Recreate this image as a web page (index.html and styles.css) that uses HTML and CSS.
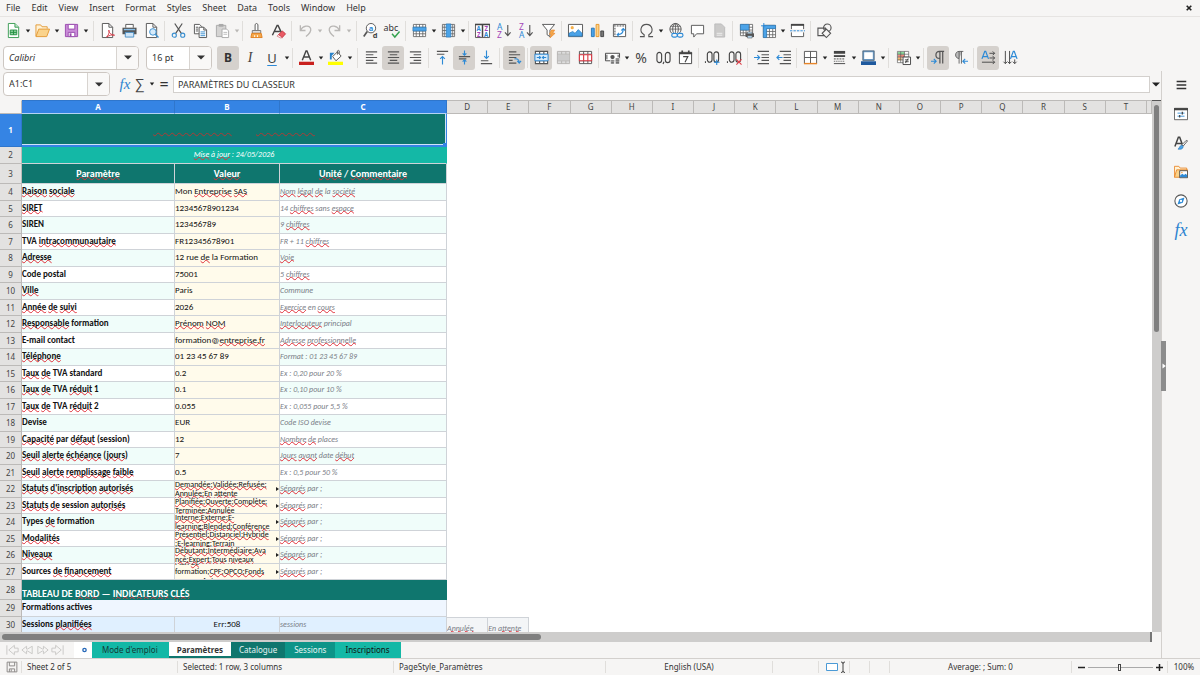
FILE: index.html
```html
<!DOCTYPE html>
<html lang="en">
<head>
<meta charset="utf-8">
<title>Paramètres - Calc</title>
<link rel="stylesheet" href="styles.css">
</head>
<body>
<svg class="sprite" aria-hidden="true">
  <symbol id="caret" viewBox="0 0 6 4"><path d="M.8.5h4.4L3 3.4z" fill="currentColor"/></symbol>
  <symbol id="down" viewBox="0 0 8 5"><path d="M0 .5h8L4 4.6z" fill="currentColor"/></symbol>
</svg>
<nav class="menubar" aria-label="Menu">
  <button>File</button><button>Edit</button><button>View</button><button>Insert</button><button>Format</button><button>Styles</button><button>Sheet</button><button>Data</button><button>Tools</button><button>Window</button><button>Help</button>
  <button class="close" aria-label="Close document"><svg width="6" height="6" viewBox="0 0 6 6"><path d="M.7.7l4.6 4.6M5.3.7L.7 5.3" stroke="#222" stroke-width="1.6"/></svg></button>
</nav>

<div class="toolbar standard" role="toolbar" aria-label="Standard">
  <button class="ico" aria-label="New"><svg viewBox="0 0 16 16"><path d="M2.5.5h7l4 4v11h-11z" fill="#fff" stroke="#3a9c53"/><path d="M9.5.5v4h4" fill="#bfe6c8" stroke="#3a9c53"/><path d="M4.500 7.500h7v5h-7zM4.500 10h7M8 7.500v5" fill="#8fd3a0" stroke="#249042"/></svg></button><button class="drop" aria-label="New options"><svg><use href="#caret"/></svg></button>
  <button class="ico" aria-label="Open"><svg viewBox="0 0 16 16"><path d="M1 14V2h5l1.500 2H13v2" fill="#fff2d5" stroke="#e39a35"/><path d="M1 14.500L4 6.500h11.500L12.500 14.500z" fill="#fad38c" stroke="#e39a35"/></svg></button><button class="drop" aria-label="Open options"><svg><use href="#caret"/></svg></button>
  <button class="ico" aria-label="Save"><svg viewBox="0 0 16 16"><path d="M1.500 1.500h13v13h-13z" fill="#c98bd8" stroke="#9a4cae"/><path d="M4.500 1.500h7v5h-7zM4.500 10h7v4.500h-7z" fill="#fff" stroke="#9a4cae"/><path d="M7 11v3.500" stroke="#9a4cae" stroke-width="2"/></svg></button><button class="drop" aria-label="Save options"><svg><use href="#caret"/></svg></button>
  <i class="sep wide"></i>
  <button class="ico" aria-label="Export as PDF"><svg viewBox="0 0 16 16"><path d="M2.500.5h7l4 4v11h-11z" fill="#fff" stroke="#555"/><path d="M9.500.5v4h4" fill="none" stroke="#555"/><path d="M7 15c3-3 3-6 2.500-7.500-1 1.500 2 5.500 6 5.500-3-1-6 .5-8.500 2z" fill="#fff" stroke="#d33a45"/></svg></button>
  <button class="ico" aria-label="Print"><svg viewBox="0 0 16 16"><path d="M4 5V1.500h8V5" fill="#fff" stroke="#555"/><path d="M.5 5h15v7H.5z" fill="#555"/><path d="M2 7h12" stroke="#8ac0ea" stroke-width="1.500"/><path d="M3.500 10h9v5h-9z" fill="#cfe5f7" stroke="#4a90c8"/></svg></button>
  <button class="ico" aria-label="Print preview"><svg viewBox="0 0 16 16"><path d="M2.500.5h7l4 4v11h-11z" fill="#fff" stroke="#555"/><path d="M9.500.5v4h4" fill="none" stroke="#555"/><circle cx="9.500" cy="9.500" r="3.500" fill="#d7ebfa" stroke="#3a8fd0"/><path d="M12 12l3.500 3.500" stroke="#3a8fd0" stroke-width="1.500"/></svg></button>
  <i class="sep"></i>
  <button class="ico" aria-label="Cut"><svg viewBox="0 0 16 16" fill="none"><path d="M4 .5l7 10.500M12 .5L5 11" stroke="#555" stroke-width="1.300"/><circle cx="3.500" cy="13" r="2.200" stroke="#3a8fd0" stroke-width="1.200"/><circle cx="12.500" cy="13" r="2.200" stroke="#3a8fd0" stroke-width="1.200"/></svg></button>
  <button class="ico" aria-label="Copy"><svg viewBox="0 0 16 16" fill="#fff" stroke="#555"><path d="M1.500 1.500h5.500l2.500 2.500v7.500h-8z"/><path d="M6.500 4.500h5l3 3v8h-8z"/><path d="M11.500 4.500v3h3M3 4.500h2.500M3 6.500h2.500M3 8.500h2.500" fill="none"/><path d="M8 9.500h5M8 11.500h5M8 13.500h5" stroke="#3a8fd0"/></svg></button>
  <button class="ico off" aria-label="Paste" disabled><svg viewBox="0 0 16 16"><path d="M1.500 2.500h10v12h-10z" fill="#d5d4d3" stroke="#aaa"/><path d="M4 1h5v3H4z" fill="#aaa"/><path d="M7.500 6.500h5l2 2v7h-7z" fill="#fff" stroke="#aaa"/><path d="M9 10h4M9 12h4" stroke="#bbb"/></svg></button><button class="drop off" aria-label="Paste options" disabled><svg><use href="#caret"/></svg></button>
  <i class="sep"></i>
  <button class="ico" aria-label="Clone formatting"><svg viewBox="0 0 16 16"><path d="M6.500 8V1.500q1.500-2 3 0V8" fill="#fff" stroke="#555"/><path d="M3.500 8h9v3h-9z" fill="#ddd" stroke="#777"/><path d="M3 11h10l1 4.500H2z" fill="#f5a84b" stroke="#e07f20"/><path d="M6 15v-2M9 15v-2" stroke="#fff"/></svg></button>
  <button class="ico" aria-label="Clear formatting"><svg viewBox="0 0 16 16"><path d="M1.500 13L6.500 2.500h1L11 10M4 9h5.500" fill="none" stroke="#444" stroke-width="1.500"/><path d="M8 12.500l4-4 3.500 3L12 15.500z" fill="#ea5b65" stroke="#c93440"/><path d="M8 12.500l4 3-1.500.5-4-2z" fill="#fff" stroke="#c93440" stroke-width=".6"/></svg></button>
  <i class="sep"></i>
  <button class="ico off" aria-label="Undo" disabled><svg viewBox="0 0 16 16"><path d="M2.500 2.500v5.500H8M2.500 8C5 3 12 1.500 13.500 6c1 3.500-2 6-5 8.500" fill="none" stroke="#b9b7b5" stroke-width="1.400"/></svg></button><button class="drop off" aria-label="Undo options" disabled><svg><use href="#caret"/></svg></button>
  <button class="ico off" aria-label="Redo" disabled><svg viewBox="0 0 16 16"><path d="M13.500 2.500v5.500H8M13.500 8C11 3 4 1.500 2.500 6c-1 3.500 2 6 5 8.500" fill="none" stroke="#b9b7b5" stroke-width="1.400"/></svg></button><button class="drop off" aria-label="Redo options" disabled><svg><use href="#caret"/></svg></button>
  <i class="sep wide"></i>
  <button class="ico" aria-label="Find and replace"><svg viewBox="0 0 16 16"><circle cx="8.500" cy="5.500" r="5" fill="#fff" stroke="#555"/><path d="M4.500 9L.8 14.500" stroke="#555" stroke-width="1.800"/><text x="6" y="8.500" font-size="8" font-weight="700" fill="#2d8ad6">a</text><text x="10.500" y="16" font-size="8" font-weight="700" fill="#444">d</text></svg></button>
  <button class="ico abc" aria-label="Spelling"><svg viewBox="0 0 16 16"><text x="-1.500" y="8" font-size="9.500" fill="#333">abc</text><path d="M7.500 11.500l3 3.500 5-6" fill="none" stroke="#35a34f" stroke-width="1.500"/></svg></button>
  <i class="sep"></i>
  <button class="ico" aria-label="Row"><svg viewBox="0 0 16 16"><path d="M1.500 1.500h13v13h-13z" fill="#fff"/><path d="M1.500 1.500h13v13h-13zM1.500 4.500h13M1.500 8.500h13M1.500 11.500h13M4.500 1.500v13M8 1.500v13M11.500 1.500v13" fill="none" stroke="#666" stroke-width=".9"/><path d="M1 4.500h14v4H1z" fill="#4ba3e8" stroke="#2878b8" stroke-width=".7"/></svg></button><button class="drop" aria-label="Row options"><svg><use href="#caret"/></svg></button>
  <button class="ico" aria-label="Column"><svg viewBox="0 0 16 16"><path d="M1.500 1.500h13v13h-13z" fill="#fff"/><path d="M1.500 1.500h13v13h-13zM1.500 4.500h13M1.500 8h13M1.500 11.500h13M3.500 1.500v13M12.500 1.500v13" fill="none" stroke="#666" stroke-width=".9"/><path d="M5.500 1h5v14h-5z" fill="#4ba3e8" stroke="#2878b8" stroke-width=".7"/></svg></button><button class="drop" aria-label="Column options"><svg><use href="#caret"/></svg></button>
  <i class="sep"></i>
  <button class="ico" aria-label="Sort"><svg viewBox="0 0 16 16"><path d="M.5 1.500h15v14H.5z" fill="#fff" stroke="#555"/><path d="M0 1.500h16M8 2v13" stroke="#444" stroke-width="1.600"/><g font-size="6.500" font-weight="700"><text x="1.700" y="8.500" fill="#2d8ad6">A</text><text x="2" y="15" fill="#a445b8">Z</text><text x="10" y="8.500" fill="#a445b8">Z</text><text x="9.700" y="15" fill="#2d8ad6">A</text></g></svg></button>
  <button class="ico" aria-label="Sort ascending"><svg viewBox="0 0 16 16"><g font-size="9"><text x="0" y="7" fill="#2d8ad6">A</text><text x="0" y="16" fill="#a445b8">Z</text></g><path d="M11.500 2v11M8.500 10l3 3.500 3-3.500" fill="none" stroke="#555" stroke-width="1.200"/></svg></button>
  <button class="ico" aria-label="Sort descending"><svg viewBox="0 0 16 16"><g font-size="9"><text x="0" y="7" fill="#a445b8">Z</text><text x="0" y="16" fill="#2d8ad6">A</text></g><path d="M11.500 2v11M8.500 10l3 3.500 3-3.500" fill="none" stroke="#555" stroke-width="1.200"/></svg></button>
  <button class="ico" aria-label="AutoFilter"><svg viewBox="0 0 16 16"><path d="M1.500 1.500h13l-5 6v7l-3-2v-5z" fill="#fff" stroke="#555"/><path d="M11 7.500h3.500L12.500 11H15l-5.500 5L11 12H9z" fill="#f5a84b" stroke="#e8862a" stroke-width=".7"/></svg></button>
  <i class="sep"></i>
  <button class="ico" aria-label="Insert image"><svg viewBox="0 0 16 16"><path d="M.5 1.500h15v13H.5z" fill="#fff" stroke="#555"/><path d="M1 14v-3l4-2 2.500 2L11 7l4 4v3z" fill="#4ba3e8" stroke="#2878b8" stroke-width=".7"/><circle cx="4.500" cy="5" r="1.700" fill="#f5b04b"/></svg></button>
  <button class="ico" aria-label="Insert chart"><svg viewBox="0 0 16 16"><path d="M1.500 5.500h3v9h-3z" fill="#4ba3e8" stroke="#2878b8"/><path d="M6.500 1.500h3v13h-3z" fill="#fad38c" stroke="#e8962a"/><path d="M11.500 8.500h3v6h-3z" fill="#777" stroke="#444"/></svg></button>
  <button class="ico" aria-label="Pivot table"><svg viewBox="0 0 16 16"><path d="M1.500 1.500h13v13h-13z" fill="#fff" stroke="#555"/><path d="M2 3h12M3 2v12" stroke="#999" stroke-width="2" stroke-dasharray="2 1"/><path d="M6 12.500c4 0 6-2 6-6M10 8l2-2 2 2M7.500 10.500l-2 2 2 1.800" fill="none" stroke="#2d8ad6" stroke-width="1.200"/></svg></button>
  <i class="sep"></i>
  <button class="ico" aria-label="Special character"><svg viewBox="0 0 16 16"><path d="M1 14.500h4.500v-2C-.5 9 2 1.500 8 1.500S16.500 9 10.500 12.500v2H15" fill="none" stroke="#555" stroke-width="1.200"/></svg></button><button class="drop" aria-label="Special character options"><svg><use href="#caret"/></svg></button>
  <button class="ico" aria-label="Hyperlink"><svg viewBox="0 0 16 16" fill="none"><circle cx="8" cy="6.500" r="6" stroke="#555"/><ellipse cx="8" cy="6.500" rx="3" ry="6" stroke="#555"/><path d="M2 6.500h12M3 3.500h10M8 .5v12" stroke="#555" stroke-width=".8"/><path d="M4 10.500h12v5H4z" fill="#f6f5f4"/><rect x="4" y="11" width="6" height="4" rx="2" stroke="#2d8ad6" stroke-width="1.200"/><rect x="10" y="11" width="6" height="4" rx="2" stroke="#2d8ad6" stroke-width="1.200"/></svg></button>
  <button class="ico" aria-label="Comment"><svg viewBox="0 0 16 16"><path d="M1.500 2.500h13v9H7l-3 3.500v-3.500H1.500z" fill="#fff" stroke="#555"/></svg></button>
  <button class="ico off" aria-label="Headers and footers" disabled><svg viewBox="0 0 16 16"><path d="M3 1h7l3.500 3.500V15H3z" fill="#cbcac9" stroke="#bbb"/><path d="M5 11h6M5 13h6" stroke="#eee"/></svg></button>
  <i class="sep"></i>
  <button class="ico" aria-label="Print area"><svg viewBox="0 0 16 16"><path d="M1.500 1.500h13v12h-13z" fill="#fff"/><path d="M1.500 1.500h13v12h-13zM1.500 4.500h13M1.500 7.500h13M1.500 10.500h13M4.500 1.500v12M7.500 1.500v12M11 1.500v12" fill="none" stroke="#666" stroke-width=".9"/><path d="M1.500 1.500h9v6h-9z" fill="#4ba3e8" stroke="#2878b8" stroke-width=".7"/><path d="M7 11h9v4H7z" fill="#555"/><path d="M9 9.500h5v2H9zM9 13.500h5V16H9z" fill="#b9dcf5" stroke="#555" stroke-width=".6"/></svg></button>
  <button class="ico" aria-label="Freeze"><svg viewBox="0 0 16 16"><path d="M2.500 2.500h13v13h-13z" fill="#fff"/><path d="M2.500 2.500h13v13h-13zM2.500 5.500h13M2.500 9h13M2.500 12.500h13M5.500 2.500v13M9 2.500v13M12.500 2.500v13" fill="none" stroke="#666" stroke-width=".9"/><path d="M2.500 2.500h13v3.500h-9.500v9.500h-3.500z" fill="#4ba3e8" stroke="#2878b8" stroke-width=".7"/><path d="M0 3h5M3 0v5" stroke="#2d8ad6"/></svg></button><button class="drop" aria-label="Freeze options"><svg><use href="#caret"/></svg></button>
  <button class="ico" aria-label="Split window"><svg viewBox="0 0 16 16"><path d="M1.500 6.500v-5h13v5M1.500 10v4.500h13V10" fill="#fff" stroke="#555"/><path d="M1 2h14" stroke="#444" stroke-width="2"/><path d="M0 8.300h16" stroke="#2d8ad6" stroke-dasharray="2.500 1.200"/></svg></button>
  <i class="sep"></i>
  <button class="ico" aria-label="Draw functions"><svg viewBox="0 0 16 16" fill="none" stroke="#555" stroke-width="1.200"><path d="M1 5.500h8v8H1z"/><circle cx="11" cy="5" r="4"/><path d="M10 6.500l4.500 4.500-4.500 4.500L5.500 11z" fill="#f6f5f4"/></svg></button>
</div>

<div class="toolbar formatting" role="toolbar" aria-label="Formatting">
  <div class="combo font"><input aria-label="Font name" value="Calibri"><button aria-label="Show fonts"><svg><use href="#down"/></svg></button></div>
  <div class="combo size"><input aria-label="Font size" value="16 pt"><button aria-label="Show sizes"><svg><use href="#down"/></svg></button></div>
  <button class="ico on glyph bold" aria-label="Bold">B</button>
  <button class="ico glyph ital" aria-label="Italic">I</button>
  <button class="ico glyph under" aria-label="Underline">U</button><button class="drop" aria-label="Underline options"><svg><use href="#caret"/></svg></button>
  <i class="sep"></i>
  <button class="ico" aria-label="Font color"><svg viewBox="0 0 16 16"><path d="M3.500 11L7.500 1h1l4 10M5 7.500h6" fill="none" stroke="#444" stroke-width="1.500"/><path d="M0 12.500h16V16H0z" fill="#c9211e"/></svg></button><button class="drop" aria-label="Font colors"><svg><use href="#caret"/></svg></button>
  <button class="ico" aria-label="Highlighting"><svg viewBox="0 0 16 16"><path d="M5 7l5-5 4 4.500-5.500 5z" fill="#fff" stroke="#555"/><path d="M10 5V1q1.500-1.500 2 0v3" fill="none" stroke="#555"/><path d="M2 10V3h5L4 6v4z" fill="#2b83ca"/><path d="M0 12.500h16V16H0z" fill="#ff0"/></svg></button><button class="drop" aria-label="Highlighting colors"><svg><use href="#caret"/></svg></button>
  <i class="sep wide"></i>
  <button class="ico" aria-label="Align left"><svg viewBox="0 0 16 16"><path d="M2 2h12M2 5h8M2 8h12M2 11h8M2 14h12" stroke="#555" stroke-width="1.200"/></svg></button>
  <button class="ico on" aria-label="Center horizontally"><svg viewBox="0 0 16 16"><path d="M2 2h12M4 5h8M2 8h12M4 11h8M2 14h12" stroke="#555" stroke-width="1.200"/></svg></button>
  <button class="ico" aria-label="Align right"><svg viewBox="0 0 16 16"><path d="M2 2h12M6 5h8M2 8h12M6 11h8M2 14h12" stroke="#555" stroke-width="1.200"/></svg></button>
  <i class="sep"></i>
  <button class="ico" aria-label="Align top"><svg viewBox="0 0 16 16"><path d="M2 1.500h12M2 4.500h8" stroke="#555" stroke-width="1.200"/><path d="M8 15.500V7M5.500 9.500L8 7l2.500 2.500" fill="none" stroke="#2d8ad6" stroke-width="1.200"/></svg></button>
  <button class="ico on" aria-label="Center vertically"><svg viewBox="0 0 16 16"><path d="M2 7h12M2 9.500h8" stroke="#555" stroke-width="1.200"/><path d="M8 .5v5M6 3.500l2 2 2-2M8 15.500v-5M6 12.500l2-2 2 2" fill="none" stroke="#2d8ad6" stroke-width="1.200"/></svg></button>
  <button class="ico" aria-label="Align bottom"><svg viewBox="0 0 16 16"><path d="M2 11.500h8M2 14.500h12" stroke="#555" stroke-width="1.200"/><path d="M8 .5V9M5.500 6.500L8 9l2.500-2.500" fill="none" stroke="#2d8ad6" stroke-width="1.200"/></svg></button>
  <i class="sep mid"></i>
  <button class="ico on" aria-label="Wrap text"><svg viewBox="0 0 16 16"><path d="M2 2h8M2 5h12M2 8h8M2 11h4M2 14h8" stroke="#555" stroke-width="1.200"/><path d="M8 9.500c3-.5 5 .5 5 4M11 11.500l2 2.500 2-2.500" fill="none" stroke="#2d8ad6" stroke-width="1.200"/></svg></button>
  <i class="sep"></i>
  <button class="ico on" aria-label="Merge and center cells"><svg viewBox="0 0 16 16"><path d="M1.500 1.500h13v13h-13z" fill="#fff"/><path d="M1.500 1.500h13v13h-13zM1.500 4.500h13M1.500 11.500h13M6 1.500v3M10.500 1.500v3M6 11.500v3M10.500 11.500v3" fill="none" stroke="#555" stroke-width="1.200"/><path d="M1 4.500h14v7H1z" fill="#d7ebfa" stroke="#2d8ad6"/><path d="M3 8h4M9 8h4M5.500 6.500L7 8 5.500 9.500M10.500 6.500L9 8l1.500 1.500" fill="none" stroke="#2d8ad6" stroke-width="1.200"/></svg></button>
  <button class="ico off" aria-label="Merge cells" disabled><svg viewBox="0 0 16 16"><path d="M1.500 1.500h13v13h-13zM1.500 4.500h13M1.500 11.500h13M6 1.500v3M10.500 1.500v3M6 11.500v3M10.500 11.500v3" fill="#ddd" stroke="#b5b3b1"/><path d="M2 5h12v6H2z" fill="#ccc"/></svg></button>
  <button class="ico" aria-label="Unmerge cells"><svg viewBox="0 0 16 16"><path d="M1.500 1.500h13v13h-13zM1.500 4.500h13M1.500 11.500h13M6 1.500v3M10.500 1.500v3M6 11.500v3M10.500 11.500v3" fill="#fff" stroke="#555"/><path d="M1.500 5h13v6.500h-13zM6 5v6M10.500 5v6" fill="#fff" stroke="#d93a45" stroke-width="1.200"/></svg></button>
  <i class="sep"></i>
  <button class="ico" aria-label="Format as currency"><svg viewBox="0 0 16 16"><path d="M.5 3.500h15v8H.5z" fill="#fff" stroke="#444"/><circle cx="8" cy="7.500" r="2.300" fill="#555"/><path d="M2 5v5M14 5v3" stroke="#444"/><path d="M6 10.500h4V15H6zM11 8.500h4.500V15H11z" fill="#666" stroke="#fff" stroke-width=".7"/><path d="M6 12.500h4M11 10.500h5M11 12.500h5" stroke="#ddd" stroke-width=".6"/></svg></button><button class="drop" aria-label="Currency options"><svg><use href="#caret"/></svg></button>
  <button class="ico glyph num" aria-label="Format as percent">%</button>
  <button class="ico" aria-label="Format as number"><svg viewBox="0 0 16 16" fill="none" stroke="#444" stroke-width="1.200"><rect x="1" y="2.500" width="5" height="11" rx="2.500"/><rect x="10" y="2.500" width="5" height="11" rx="2.500"/><path d="M8.500 12.500L7.500 15"/></svg></button>
  <button class="ico" aria-label="Format as date"><svg viewBox="0 0 16 16"><path d="M1.500 2.500h13v12h-13z" fill="#fff" stroke="#444"/><path d="M1 3.500h14M4.500.5v3M11.500.5v3" stroke="#444" stroke-width="1.800"/><path d="M5.500 7h5L7.500 13" fill="none" stroke="#444" stroke-width="1.200"/></svg></button>
  <i class="sep"></i>
  <button class="ico" aria-label="Add decimal place"><svg viewBox="0 0 16 16" fill="none" stroke="#444" stroke-width="1.200"><path d="M.5 12v1.800"/><rect x="2.500" y="2" width="5" height="11" rx="2.500"/><rect x="9.500" y="2" width="5" height="11" rx="2.500"/><path d="M12.500 10v6M9.500 13h6" stroke="#2d8ad6"/></svg></button>
  <button class="ico" aria-label="Delete decimal place"><svg viewBox="0 0 16 16" fill="none" stroke="#444" stroke-width="1.200"><path d="M.5 12v1.800"/><rect x="2.500" y="2" width="5" height="11" rx="2.500"/><rect x="9.500" y="2" width="5" height="11" rx="2.500"/><path d="M10 10l5.500 5.500M15.500 10L10 15.500" stroke="#e0404a"/></svg></button>
  <i class="sep"></i>
  <button class="ico" aria-label="Increase indent"><svg viewBox="0 0 16 16" fill="none"><path d="M4 1.500h12M8 5h8M8 8h8M8 11h8M4 14.500h12" stroke="#555" stroke-width="1.200"/><path d="M0 8h6M3.500 5.500L6 8l-2.500 2.500" stroke="#2d8ad6" stroke-width="1.200"/></svg></button>
  <button class="ico" aria-label="Decrease indent"><svg viewBox="0 0 16 16" fill="none"><path d="M4 1.500h12M8 5h8M8 8h8M8 11h8M4 14.500h12" stroke="#555" stroke-width="1.200"/><path d="M1 8h6M3.500 5.500L1 8l2.500 2.500" stroke="#2d8ad6" stroke-width="1.200"/></svg></button>
  <i class="sep"></i>
  <button class="ico" aria-label="Borders"><svg viewBox="0 0 16 16"><path d="M1.500 14.500v-13h13v13M8 1.500v13M1.500 8h13" fill="#fff" stroke="#555"/><path d="M1 14.500h14" stroke="#e8862a" stroke-width="1.500"/></svg></button><button class="drop" aria-label="Border options"><svg><use href="#caret"/></svg></button>
  <button class="ico" aria-label="Border style"><svg viewBox="0 0 16 16" stroke="#444"><path d="M2 2.500h12" stroke-width="3"/><path d="M2 6.500h12" stroke-width="2"/><path d="M2 9.500h12" stroke-dasharray="2 1"/><path d="M2 12h12" stroke-dasharray="1 1"/><path d="M2 14.500h12"/></svg></button><button class="drop" aria-label="Border style options"><svg><use href="#caret"/></svg></button>
  <button class="ico" aria-label="Border color"><svg viewBox="0 0 16 16"><path d="M2.500 1.500h11v9h-11z" fill="#fff" stroke="#6a9fcf" stroke-width="1.800"/><path d="M2 1h12v10H2z" fill="none" stroke="#444" stroke-width=".6"/><path d="M0 12h16v4H0z" fill="#1f5a9e"/></svg></button><button class="drop" aria-label="Border colors"><svg><use href="#caret"/></svg></button>
  <i class="sep mid"></i>
  <button class="ico" aria-label="Conditional formatting"><svg viewBox="0 0 16 16"><path d="M1.500 1.500h12v12h-12z" fill="#fff"/><path d="M2 2h7v3H2z" fill="#8ddb9b"/><path d="M2 5h7v3H2z" fill="#f08a7c"/><path d="M2 8h4v3H2z" fill="#f4b86c"/><path d="M1.500 1.500h12v12h-12zM1.500 4.500h12M1.500 7.500h12M1.500 10.500h12M5 1.500v12M9 1.500v12" fill="none" stroke="#555" stroke-width=".7"/><path d="M7.500 7.500h8v8h-8z" fill="#fff" stroke="#444"/><path d="M9.500 10.500h4M9.500 12.500h4M13 9l-3 5" stroke="#444"/></svg></button><button class="drop" aria-label="Conditional options"><svg><use href="#caret"/></svg></button>
  <i class="sep mid"></i>
  <button class="ico on" aria-label="Left-to-right"><svg viewBox="0 0 16 16" fill="none"><path d="M9 9C4 9 4 1.500 9 1.500h5M9.500 1.500v13M12.500 1.500v13" stroke="#555" stroke-width="1.300"/><path d="M0 12h5.500M3 9.500L5.500 12 3 14.500" stroke="#2d8ad6" stroke-width="1.200"/></svg></button>
  <button class="ico" aria-label="Right-to-left"><svg viewBox="0 0 16 16"><path d="M6.500 9C1.500 9 1.500 1.500 6.500 1.500H10" fill="#bbb"/><path d="M6.500 9C1.500 9 1.500 1.500 6.500 1.500H11M6.500 1.500v13M9 1.500v13" fill="none" stroke="#555" stroke-width=".9"/><path d="M16 12h-5M13 9.500L10.500 12l2.500 2.500" fill="none" stroke="#2d8ad6" stroke-width="1.200"/></svg></button>
  <i class="sep mid"></i>
  <button class="ico on" aria-label="Text from left to right"><svg viewBox="0 0 16 16" fill="none"><path d="M1 9.500L4 1.500h1l3 8M2.200 7h5" stroke="#2d8ad6" stroke-width="1.300"/><path d="M9 3.500h5.500M12.500 1.500l2 2-2 2M9 8.500h5.500M12.500 6.500l2 2-2 2M1 13h13.500M12.500 11l2 2-2 2" stroke="#444"/></svg></button>
  <button class="ico" aria-label="Text from top to bottom"><svg viewBox="0 0 16 16" fill="none"><path d="M8 9.500L11 1.500h1l3 8M9.200 7h5" stroke="#2d8ad6" stroke-width="1.300"/><path d="M2.500 1v13.500M.5 12.500l2 2 2-2M7 1v13.500M5 12.500l2 2 2-2M12.500 10v4.500M10.500 12.500l2 2 2-2" stroke="#444"/></svg></button>
</div>

<div class="main">
  <main class="work">
    <div class="formula">
      <div class="combo ref"><input aria-label="Name box" value="A1:C1"><button aria-label="Named ranges"><svg><use href="#down"/></svg></button></div>
      <button class="fx" aria-label="Function wizard">fx</button>
      <button class="sigma" aria-label="Select function">∑</button><button class="drop" aria-label="Functions"><svg><use href="#caret"/></svg></button>
      <button class="equals" aria-label="Formula">=</button>
      <input class="line" aria-label="Input line" value="PARAMÈTRES DU CLASSEUR">
      <button class="expand" aria-label="Expand formula bar"><svg><use href="#down"/></svg></button>
    </div>
    <div class="gridrow">
      <div class="grid">
        <table>
          <colgroup><col class="cn"><col class="ca"><col class="cb"><col class="cc"><col><col><col><col><col><col><col><col><col><col><col><col><col><col><col><col><col><col class="cz"></colgroup>
          <thead><tr><th class="corner"></th><th class="sel">A</th><th class="sel">B</th><th class="sel">C</th><th>D</th><th>E</th><th>F</th><th>G</th><th>H</th><th>I</th><th>J</th><th>K</th><th>L</th><th>M</th><th>N</th><th>O</th><th>P</th><th>Q</th><th>R</th><th>S</th><th>T</th><th></th></tr></thead>
          <tbody>
          <tr class="r1"><th class="sel">1</th><td colspan="3" class="title"><div class="range"><s>PARAMÈTRES</s> DU <s>CLASSEUR</s></div></td></tr>
          <tr class="r2"><th>2</th><td colspan="3"><s>Mise</s> à <s>jour</s> : 24/05/2026</td></tr>
          <tr class="r3"><th>3</th><td><s>Paramètre</s></td><td><s>Valeur</s></td><td><s>Unité</s> / <s>Commentaire</s></td></tr>
          <tr class="d"><th>4</th><td><s>Raison</s> <s>sociale</s></td><td>Mon <s>Entreprise</s> <s>SAS</s></td><td><s>Nom</s> <s>légal</s> <s>de</s> la <s>société</s></td></tr>
          <tr class="d"><th>5</th><td><s>SIRET</s></td><td>12345678901234</td><td>14 <s>chiffres</s> sans <s>espace</s></td></tr>
          <tr class="d"><th>6</th><td>SIREN</td><td>123456789</td><td>9 <s>chiffres</s></td></tr>
          <tr class="d"><th>7</th><td>TVA <s>intracommunautaire</s></td><td>FR12345678901</td><td>FR + 11 <s>chiffres</s></td></tr>
          <tr class="d"><th>8</th><td><s>Adresse</s></td><td>12 rue <s>de</s> la Formation</td><td><s>Voie</s></td></tr>
          <tr class="d"><th>9</th><td>Code postal</td><td>75001</td><td>5 <s>chiffres</s></td></tr>
          <tr class="d"><th>10</th><td><s>Ville</s></td><td>Paris</td><td>Commune</td></tr>
          <tr class="d"><th>11</th><td><s>Année</s> <s>de</s> <s>suivi</s></td><td>2026</td><td><s>Exercice</s> en <s>cours</s></td></tr>
          <tr class="d"><th>12</th><td><s>Responsable</s> formation</td><td><s>Prénom</s> <s>NOM</s></td><td><s>Interlocuteur</s> principal</td></tr>
          <tr class="d"><th>13</th><td>E-mail contact</td><td>formation@<s>entreprise.fr</s></td><td><s>Adresse</s> <s>professionnelle</s></td></tr>
          <tr class="d"><th>14</th><td><s>Téléphone</s></td><td>01 23 45 67 89</td><td>Format : 01 23 45 67 89</td></tr>
          <tr class="d"><th>15</th><td><s>Taux</s> <s>de</s> TVA standard</td><td>0.2</td><td>Ex : 0,20 pour 20 %</td></tr>
          <tr class="d"><th>16</th><td><s>Taux</s> <s>de</s> TVA <s>réduit</s> 1</td><td>0.1</td><td>Ex : 0,10 pour 10 %</td></tr>
          <tr class="d"><th>17</th><td><s>Taux</s> <s>de</s> TVA <s>réduit</s> 2</td><td>0.055</td><td>Ex : 0,055 pour 5,5 %</td></tr>
          <tr class="d"><th>18</th><td>Devise</td><td>EUR</td><td>Code ISO devise</td></tr>
          <tr class="d"><th>19</th><td><s>Capacité</s> par <s>défaut</s> (session)</td><td>12</td><td><s>Nombre</s> <s>de</s> places</td></tr>
          <tr class="d"><th>20</th><td><s>Seuil</s> <s>alerte</s> <s>échéance</s> (<s>jours</s>)</td><td>7</td><td><s>Jours</s> <s>avant</s> date <s>début</s></td></tr>
          <tr class="d"><th>21</th><td><s>Seuil</s> <s>alerte</s> <s>remplissage</s> <s>faible</s></td><td>0.5</td><td>Ex : 0,5 pour 50 %</td></tr>
          <tr class="d"><th>22</th><td><s>Statuts</s> <s>d'inscription</s> <s>autorisés</s></td><td class="more"><div><span><s>Demandée;Validée;Refusée;</s><br><s>Annulée;En</s> <s>attente</s></span></div></td><td><s>Séparés</s> par ;</td></tr>
          <tr class="d"><th>23</th><td><s>Statuts</s> <s>de</s> session <s>autorisés</s></td><td class="more"><div><span><s>Planifiée;Ouverte;Complète;</s><br><s>Terminée;Annulée</s></span></div></td><td><s>Séparés</s> par ;</td></tr>
          <tr class="d"><th>24</th><td>Types <s>de</s> formation</td><td class="more"><div><span><s>Interne;Externe;E-</s><br><s>learning;Blended;Conférence</s></span></div></td><td><s>Séparés</s> par ;</td></tr>
          <tr class="d"><th>25</th><td><s>Modalités</s></td><td class="more"><div><span><s>Présentiel;Distanciel;Hybride</s><br><s>;E-learning;Terrain</s></span></div></td><td><s>Séparés</s> par ;</td></tr>
          <tr class="d"><th>26</th><td><s>Niveaux</s></td><td class="more"><div><span><s>Débutant;Intermédiaire;Ava</s><br><s>ncé;Expert;Tous</s> <s>niveaux</s></span></div></td><td><s>Séparés</s> par ;</td></tr>
          <tr class="d last"><th>27</th><td>Sources <s>de</s> <s>financement</s></td><td class="more"><div><span>Plan <s>de</s><br>formation;<s>CPF;OPCO;Fonds</s><br><s>propres;Autre</s></span></div></td><td><s>Séparés</s> par ;</td></tr>
          <tr class="r28"><th>28</th><td colspan="3">TABLEAU DE <s>BORD</s> — <s>INDICATEURS</s> <s>CLÉS</s></td></tr>
          <tr class="k r29"><th>29</th><td colspan="3">Formations actives</td></tr>
          <tr class="k r30"><th>30</th><td>Sessions <s>planifiées</s></td><td class="err">Err:508</td><td class="unit">sessions</td><td class="side"><s>Annulée</s></td><td class="side">En <s>attente</s></td></tr>
          </tbody>
        </table>
      </div>
      <div class="vscroll"><div class="thumb"></div></div>
    </div>
    <div class="hscroll"><div class="thumb"></div></div>
    <div class="tabs">
      <div class="tabnav">
        <button aria-label="First sheet"><svg viewBox="0 0 16 12"><path d="M2 1v10M10 1L4 6l6 5V8h4V4h-4z"/></svg></button><button aria-label="Previous sheet"><svg viewBox="0 0 16 12"><path d="M7 2L2 6l5 4V7h1l5 3V2L8 5H7z"/></svg></button><button aria-label="Next sheet"><svg viewBox="0 0 16 12"><path d="M9 2l5 4-5 4V7H8l-5 3V2l5 3h1z"/></svg></button><button aria-label="Last sheet"><svg viewBox="0 0 16 12"><path d="M14 1v10M6 1l6 5-6 5V8H2V4h4z"/></svg></button>
      </div>
      <button class="add" aria-label="Add sheet"><svg width="5" height="6" viewBox="0 0 6 6"><circle cx="3" cy="3" r="2" fill="none" stroke="#2668b8" stroke-width="1.600"/></svg></button>
      <button class="tab t1">Mode d'emploi</button><button class="tab t2">Paramètres</button><button class="tab t3">Catalogue</button><button class="tab t4">Sessions</button><button class="tab t1 t5">Inscriptions</button>
    </div>
  </main>
  <aside class="sidebar">
    <button aria-label="Sidebar settings"><svg viewBox="0 0 16 16"><path d="M3 4h11M3 8h11M3 12h11" stroke="#333" stroke-width="1.800"/></svg></button>
    <button aria-label="Properties"><svg viewBox="0 0 16 16"><path d="M.5 1.500h15v13H.5z" fill="#fff" stroke="#555"/><path d="M0 2.500h16" stroke="#444" stroke-width="2.500"/><path d="M4 7h8M4 10.500h8" stroke="#2d8ad6"/><path d="M9.500 5.500v3M6.500 9v3" stroke="#444" stroke-width="1.400"/></svg></button>
    <button aria-label="Styles"><svg viewBox="0 0 16 16"><path d="M1 12L5 1.500h1.500L10 11M2.500 8.500h6" fill="none" stroke="#444" stroke-width="1.700"/><path d="M15.500 5.500l-5 6-1.500-1.500 5-5z" fill="#fff" stroke="#555"/><path d="M9 10.500l1.500 1.500c0 3-3 3.500-6 3 2-1 1.500-4 4.500-4.500z" fill="#4ba3e8" stroke="#2878b8" stroke-width=".7"/></svg></button>
    <button aria-label="Gallery"><svg viewBox="0 0 16 16"><path d="M.5 14V1.500h5L7 3.500h7.500V6" fill="#fff2d5" stroke="#e8862a"/><path d="M.5 14L3 5.500h12.500V14z" fill="#fad38c" stroke="#e8862a"/><path d="M6.500 6.500h9v8h-9z" fill="#fff" stroke="#444"/><path d="M7 14v-2l2.500-2 2 1.500L13 10l2 1.500V14z" fill="#2d8ad6"/><circle cx="9" cy="8.700" r=".9" fill="#f5a84b"/></svg></button>
    <button aria-label="Navigator"><svg viewBox="0 0 16 16"><circle cx="8" cy="8" r="7" fill="#fff" stroke="#555" stroke-width="1.200"/><path d="M12 4l-2 6-6 2 2-6z" fill="#2d8ad6"/><circle cx="8" cy="8" r="1.300" fill="#fff"/></svg></button>
    <button class="fx" aria-label="Functions">fx</button>
    <button class="handle" aria-label="Hide sidebar"><svg width="4" height="6" viewBox="0 0 4 6"><path d="M.5.500L3.800 3 .5 5.500z" fill="#fff"/></svg></button>
  </aside>
</div>

<footer class="status">
  <div class="s-icon"><svg width="12" height="12" viewBox="0 0 16 16" fill="none" stroke="#8c8a88" stroke-width="1.300"><path d="M1.500 1.500h13v13h-13zM4.500 1.500v5h7v-5M4.500 14.500v-4h7v4M7 11v3"/></svg></div>
  <div class="s-sheet">Sheet 2 of 5</div>
  <div class="s-sel">Selected: 1 row, 3 columns</div>
  <div class="s-page">PageStyle_Paramètres</div>
  <div class="s-lang">English (USA)</div>
  <div class="s-gap"></div>
  <div class="s-mode"><svg width="20" height="12" viewBox="0 0 20 12"><path d="M.5 2.500h11v7H.5z" fill="#fff" stroke="#4b9ad6"/><path d="M15 1q2 0 2 1.500 0-1.500 2-1.500M17 2v8M15 11.500q2 0 2-1.500 0 1.500 2 1.500" fill="none" stroke="#444"/></svg></div>
  <div class="s-a"></div><div class="s-a"></div>
  <div class="s-sum">Average: ; Sum: 0</div>
  <div class="s-zoom"><button aria-label="Zoom out"><svg width="7" height="7" viewBox="0 0 7 7"><path d="M0 3.500h7" stroke="#222" stroke-width="1.500"/></svg></button><input type="range" aria-label="Zoom" min="0" max="100" value="49"><button aria-label="Zoom in"><svg width="7" height="7" viewBox="0 0 7 7"><path d="M0 3.500h7M3.500 0v7" stroke="#222" stroke-width="1.500"/></svg></button></div>
  <div class="s-pct">100%</div>
</footer>
</body>
</html>
```
FILE: styles.css
```css
* { box-sizing: border-box; }
body {
  margin: 0;
  height: 100vh;
  display: flex;
  flex-direction: column;
  overflow: hidden;
  background: #f6f5f4;
  color: #333;
  font: 9px/12px "Noto Sans", "Open Sans", sans-serif;
}
.sprite { display: none; }
svg text { font-family: "Noto Sans", sans-serif; }
button, input { font: inherit; color: inherit; margin: 0; padding: 0; border: 0; background: none; }
button { display: inline-flex; align-items: center; justify-content: center; flex: none; white-space: nowrap; }
input { min-width: 0; }

/* Menu */
.menubar { display: flex; align-items: center; gap: 11px; height: 17px; padding: 0 8px 0 6px; border-bottom: 1px solid #e6e4e2; flex: none; }
.close { margin-left: auto; }

/* Toolbars */
.toolbar { display: flex; align-items: center; flex: none; height: 27px; padding-left: 2px; }
.toolbar.formatting { padding-left: 3px; }
.ico { width: 22px; height: 24px; border-radius: 3px; }
.ico svg { width: 15px; height: 15px; overflow: visible; }
.ico.on { background: #d5d1cd; }
.drop { width: 7px; height: 24px; color: #222; }
.drop svg { width: 6px; height: 4px; }
.drop.off { color: #b9b7b5; }
.sep { width: 5px; height: 20px; flex: none; background: linear-gradient(#e0dedb, #e0dedb) 2px 0 / 1px 100% no-repeat; }
.sep.mid { width: 6px; }
.sep.wide { width: 7px; background-position: 4px 0; }
.glyph { color: #444; font-size: 13px; }
.glyph.bold { font-weight: 700; color: #333; font-size: 12px; }
.glyph.ital { font: italic 14px "Liberation Serif", serif; }
.glyph.under { text-decoration: underline #2d8ad6 1px; text-underline-offset: 2px; }
.glyph.num { font-size: 14px; }

.combo { display: flex; height: 24px; border: 1px solid #cdc7c2; border-radius: 4px; background: #fff; overflow: hidden; flex: none; }
.combo input { flex: 1; width: 0; padding-left: 5px; }
.combo button { width: 22px; background: #f9f8f7; border-left: 1px solid #d8d4d0; color: #333; }
.combo svg, .expand svg { width: 8px; height: 5px; }
.font { width: 136px; margin-right: 7px; }
.font input { font-style: italic; }
.size { width: 66px; margin-right: 5px; }
.ref { width: 107px; }

/* Workspace */
.main { flex: 1; display: flex; min-height: 0; }
.work { flex: 1; display: flex; flex-direction: column; min-width: 0; border-right: 1px solid #d3d0cd; }
.formula { display: flex; align-items: center; height: 29px; padding: 0 0 3px 3px; flex: none; }
.fx { font: italic 15px "Liberation Serif", serif; color: #2d83d0; }
.formula .fx { margin-left: 8px; width: 14px; }
.sigma { width: 16px; font-size: 14px; color: #444; }
.equals { width: 18px; font-size: 16px; color: #333; }
.line { flex: 1; height: 17px; padding-left: 4px; background: #fff; border: 1px solid #d3d0cd; }
.expand { width: 11px; color: #222; }

.gridrow { flex: 1; display: flex; min-height: 0; }
.grid { flex: 1; min-width: 0; overflow: hidden; background: #fff; }
table { width: 100%; table-layout: fixed; border-collapse: separate; border-spacing: 0; }
.cn { width: 22px; }
.ca { width: 153px; }
.cb { width: 105px; }
.cc { width: 167px; }
.cz { width: 5px; }
th, td { padding: 0; overflow: hidden; white-space: nowrap; line-height: 10px; }
th { background: #e3e2e1; border: solid #bcbab8; border-width: 0 1px 1px 0; font-weight: 400; font-size: 8px; color: #444; height: 16px; }
thead th { height: 14px; border-top: 1px solid #bcbab8; font-size: 8px; }
th.corner { background: #f6f5f4; border-color: #f6f5f4 #bcbab8 #bcbab8 #f6f5f4; }
th.sel { background: #3584e4; border-color: #2f76cc; color: #fff; font-weight: 700; }
thead th.sel { border-bottom-color: #b5d3f5; }
td { font: 8px/10px Carlito, Lato, sans-serif; color: #111; border: solid #cfd3d8; border-width: 0 1px 1px 0; padding-bottom: 2px; }
s { text-decoration: underline wavy #e0303a 1px; text-underline-offset: -1px; text-decoration-skip-ink: none; }

.r1 { height: 33px; }
td.title { padding: 0; background: #0f766e; color: #0f766e; border: 0; font-size: 14px; font-weight: 700; text-align: center; }
.title s { text-decoration-color: #b03a34; }
.range { position: relative; height: 33px; padding-top: 10px; border: solid #3584e4; border-width: 0 1px 2px 0; box-shadow: inset -1px -1px #cfe3fa; }
.range::after { content: ""; position: absolute; right: -1px; bottom: -2px; width: 4px; height: 4px; background: #3584e4; }
.r2 { height: 17px; }
.r2 td { background: #14b8a6; color: #fff; font-style: italic; text-align: center; border-right-color: #14b8a6; }
.r3 { height: 20px; }
.r3 td { background: #0f766e; color: #fff; font-size: 10px; font-weight: 700; text-align: center; padding-bottom: 0; }
.d { height: 17px; }
.d:nth-child(odd) { height: 16px; }
.d:nth-child(even) td { background: #f0fdfa; }
.d td:nth-child(2) { font-weight: 700; font-size: 9px; }
.d td:nth-child(3) { background: #fffbeb; font-size: 9px; }
.d td:nth-child(4) { font-style: italic; color: #7b8088; }
.d td.more:nth-child(3) { position: relative; font-size: 8px; padding: 0; overflow: visible; }
.more div { height: 15px; display: flex; align-items: center; line-height: 9px; }
.last .more div { overflow: hidden; }
.more::after { content: ""; position: absolute; right: 0; top: 6px; border: solid transparent; border-width: 2px 0 2px 3px; border-left-color: #222; }
.r28 { height: 20px; }
.r28 td { background: #0f766e; color: #fff; font-size: 10px; font-weight: 700; vertical-align: bottom; border-color: #0f766e; padding-bottom: 0; }
.k td { background: #eff6ff; font-weight: 700; font-size: 9px; }
.r29 { height: 17px; }
.r30 { height: 17px; }
.r30 td { background: #e0f0ff; }
.r30 td.err { font-weight: 400; text-align: center; }
.r30 td.unit { font-weight: 400; font-size: 8px; font-style: italic; color: #7b8088; }
.r30 td.side { background: #f3f5f7; color: #7b8088; font-weight: 400; font-size: 8px; font-style: italic; vertical-align: bottom; padding-bottom: 0; border-top: 1px solid #cfd3d8; }

.vscroll { width: 9px; background: #cecdcc; padding: 4px 2px 0; flex: none; border-top: 1px solid #555; }
.vscroll .thumb { height: 43%; border-radius: 3px; background: #7f7f7f; }
.hscroll { height: 10px; flex: none; margin-right: 9px; padding: 2px; background: #cecdcc; border-right: 2px solid #777; }
.hscroll .thumb { width: 47%; height: 6px; border-radius: 3px; background: #7f7f7f; }

.tabs { display: flex; height: 16px; flex: none; font-size: 8px; }
.tabnav { display: flex; width: 74px; padding-left: 5px; }
.tabnav button { width: 15px; }
.tabnav svg { width: 15px; height: 12px; fill: #f6f5f4; stroke: #c9c7c5; }
.add { width: 18px; background: #fff; justify-content: flex-end; padding-right: 5px; }
.tab { padding: 0 11px 1px 10px; }
.t1 { background: #14b8a6; color: #143a36; }
.t2 { background: #fff; font-weight: 700; padding: 0 8px 1px; box-shadow: inset 0 -2px #0f766e; }
.t3 { background: #0f766e; color: #e6f5f3; padding: 0 8px 1px; }
.t4 { background: #0d9488; color: #e6f5f3; padding: 0 9px 1px; }
.t5 { color: #111; }

.sidebar { position: relative; width: 38px; flex: none; display: flex; flex-direction: column; align-items: center; gap: 5px; padding-top: 2px; }
.sidebar button { width: 24px; height: 24px; }
.sidebar svg { width: 14px; height: 14px; }
.sidebar .fx { font-size: 18px; }
.sidebar .handle { position: absolute; left: -1px; top: 46%; width: 5px; height: 50px; background: #8c8c8c; }
.sidebar .handle svg { width: 4px; height: 6px; }

/* Status bar */
.status { display: flex; align-items: center; flex: none; height: 17px; font-size: 8px; border-top: 1px solid #d3d0cd; }
.status > div { height: 12px; flex: none; border-right: 1px solid #e0dedb; }
.status .s-icon { width: 22px; padding-left: 6px; }
.s-sheet { width: 156px; padding-left: 5px; }
.s-sel { width: 216px; padding-left: 5px; }
.s-page { width: 212px; padding-left: 5px; }
.s-lang { width: 167px; text-align: center; }
.status .s-gap { flex: 1; }
.s-mode { width: 31px; padding-left: 7px; }
.s-a { width: 20px; }
.s-sum { width: 182px; text-align: center; }
.s-zoom { display: flex; align-items: center; width: 96px; padding: 0 4px 0 6px; gap: 3px; }
.s-zoom input { flex: 1; height: 12px; appearance: none; background: linear-gradient(#aaa, #aaa) 0 50% / 100% 1px no-repeat; }
.s-zoom input::-webkit-slider-thumb { appearance: none; width: 3px; height: 7px; background: #f6f5f4; border: 1px solid #444; }
.status .s-pct { width: 32px; text-align: center; border: 0; }
```
